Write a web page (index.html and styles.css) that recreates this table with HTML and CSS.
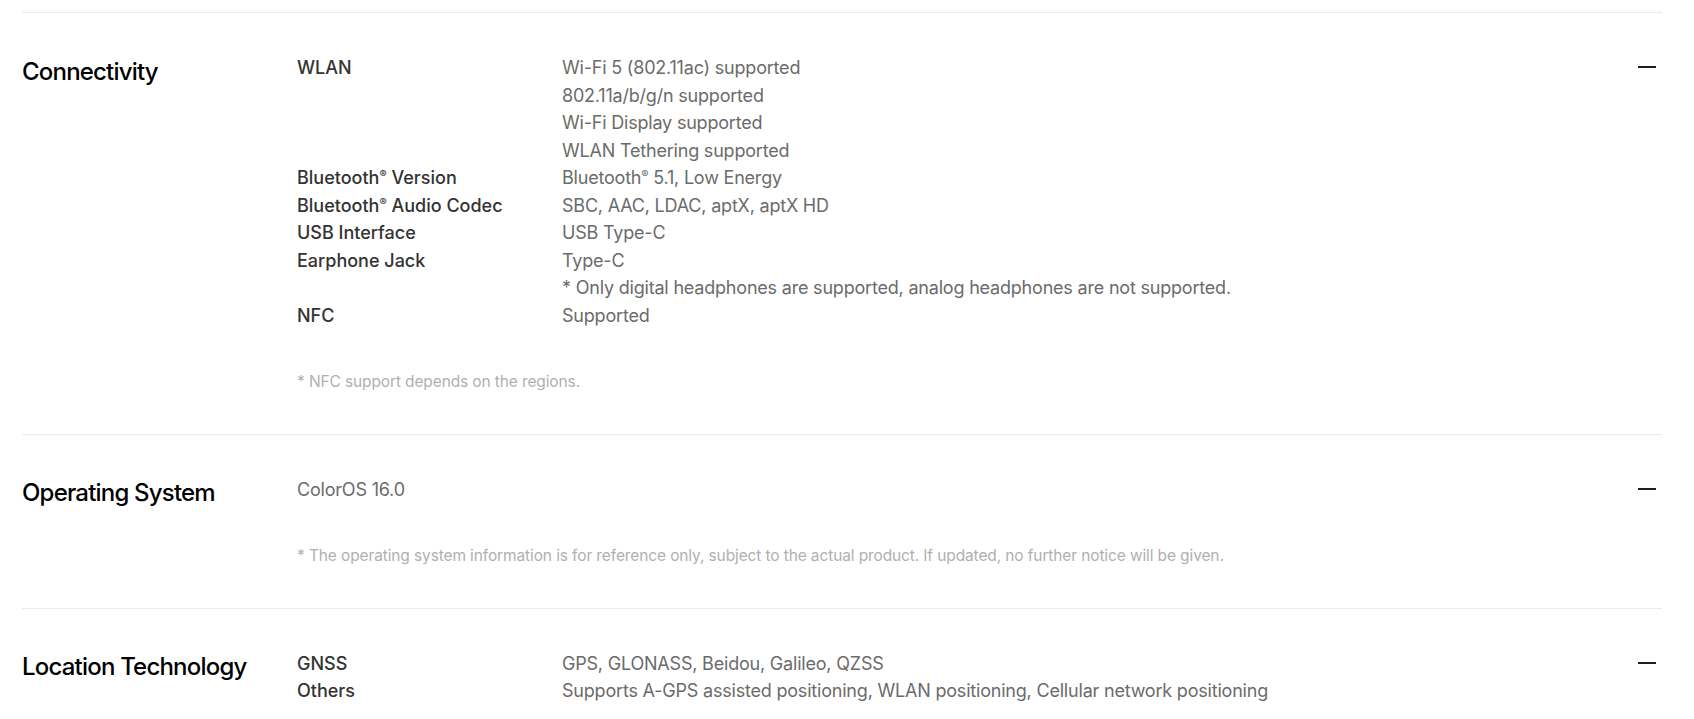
FILE: index.html
```html
<!DOCTYPE html>
<html lang="en">
<head>
<meta charset="utf-8">
<title>Specs</title>
<link rel="stylesheet" href="styles.css">
</head>
<body>
<div class="specs">
  <section class="spec">
    <h2 class="spec-title">Connectivity</h2>
    <div class="spec-body">
      <dl class="spec-list">
        <dt>WLAN</dt>
        <dd>Wi-Fi 5 (802.11ac) supported<br>802.11a/b/g/n supported<br>Wi-Fi Display supported<br>WLAN Tethering supported</dd>
        <dt>Bluetooth<sup>®</sup> Version</dt>
        <dd>Bluetooth<sup>®</sup> 5.1, Low Energy</dd>
        <dt>Bluetooth<sup>®</sup> Audio Codec</dt>
        <dd>SBC, AAC, LDAC, aptX, aptX HD</dd>
        <dt>USB Interface</dt>
        <dd>USB Type-C</dd>
        <dt>Earphone Jack</dt>
        <dd>Type-C<br>* Only digital headphones are supported, analog headphones are not supported.</dd>
        <dt>NFC</dt>
        <dd>Supported</dd>
      </dl>
      <p class="spec-note">* NFC support depends on the regions.</p>
    </div>
    <button class="spec-toggle" aria-label="Collapse"><span class="minus"></span></button>
  </section>

  <section class="spec">
    <h2 class="spec-title">Operating System</h2>
    <div class="spec-body">
      <p class="spec-value">ColorOS 16.0</p>
      <p class="spec-note">* The operating system information is for reference only, subject to the actual product. If updated, no further notice will be given.</p>
    </div>
    <button class="spec-toggle" aria-label="Collapse"><span class="minus"></span></button>
  </section>

  <section class="spec">
    <h2 class="spec-title">Location Technology</h2>
    <div class="spec-body">
      <dl class="spec-list">
        <dt>GNSS</dt>
        <dd>GPS, GLONASS, Beidou, Galileo, QZSS</dd>
        <dt>Others</dt>
        <dd>Supports A-GPS assisted positioning, WLAN positioning, Cellular network positioning</dd>
      </dl>
    </div>
    <button class="spec-toggle" aria-label="Collapse"><span class="minus"></span></button>
  </section>
</div>
</body>
</html>
```

FILE: styles.css
```css
* { box-sizing: border-box; }

html, body {
  margin: 0;
  padding: 0;
  background: #ffffff;
}

body {
  font-family: Inter, "Liberation Sans", Arial, sans-serif;
  -webkit-font-smoothing: antialiased;
}

.specs {
  width: 1640px;
  margin: 12px 0 0 22px;
}

.spec {
  display: grid;
  grid-template-columns: 275px 1fr 24px;
  border-top: 1px solid #ebebeb;
  padding: 41px 0 41px 0;
}

.spec-title {
  margin: 0;
  padding-top: 1.5px;
  font-size: 24px;
  line-height: 32px;
  font-weight: 500;
  letter-spacing: -0.8px;
  color: #000000;
}

.spec-body {
  min-width: 0;
}

.spec-list {
  display: grid;
  grid-template-columns: 265px 1fr;
  margin: 0;
  font-size: 18px;
  line-height: 27.5px;
}

.spec-list dt {
  margin: 0;
  color: #333333;
  font-weight: 500;
}

.spec-list dd {
  margin: 0;
  color: #6b6b6b;
  letter-spacing: -0.2px;
}

.spec-list sup {
  font-size: 0.6em;
  line-height: 0;
  vertical-align: 0.6em;
}

.spec-value {
  margin: 0;
  font-size: 18px;
  line-height: 27.5px;
  letter-spacing: -0.2px;
  color: #6b6b6b;
}

.spec-note {
  margin: 41.5px 0 0 0;
  font-size: 15.5px;
  line-height: 22px;
  letter-spacing: -0.12px;
  color: #b0b0b0;
}

.spec-toggle {
  justify-self: end;
  align-self: start;
  width: 24px;
  height: 26px;
  padding: 0;
  border: 0;
  background: transparent;
  display: flex;
  align-items: center;
  justify-content: flex-start;
  cursor: pointer;
}

.minus {
  display: block;
  width: 18px;
  height: 2px;
  background: #1f1f1f;
}
```
